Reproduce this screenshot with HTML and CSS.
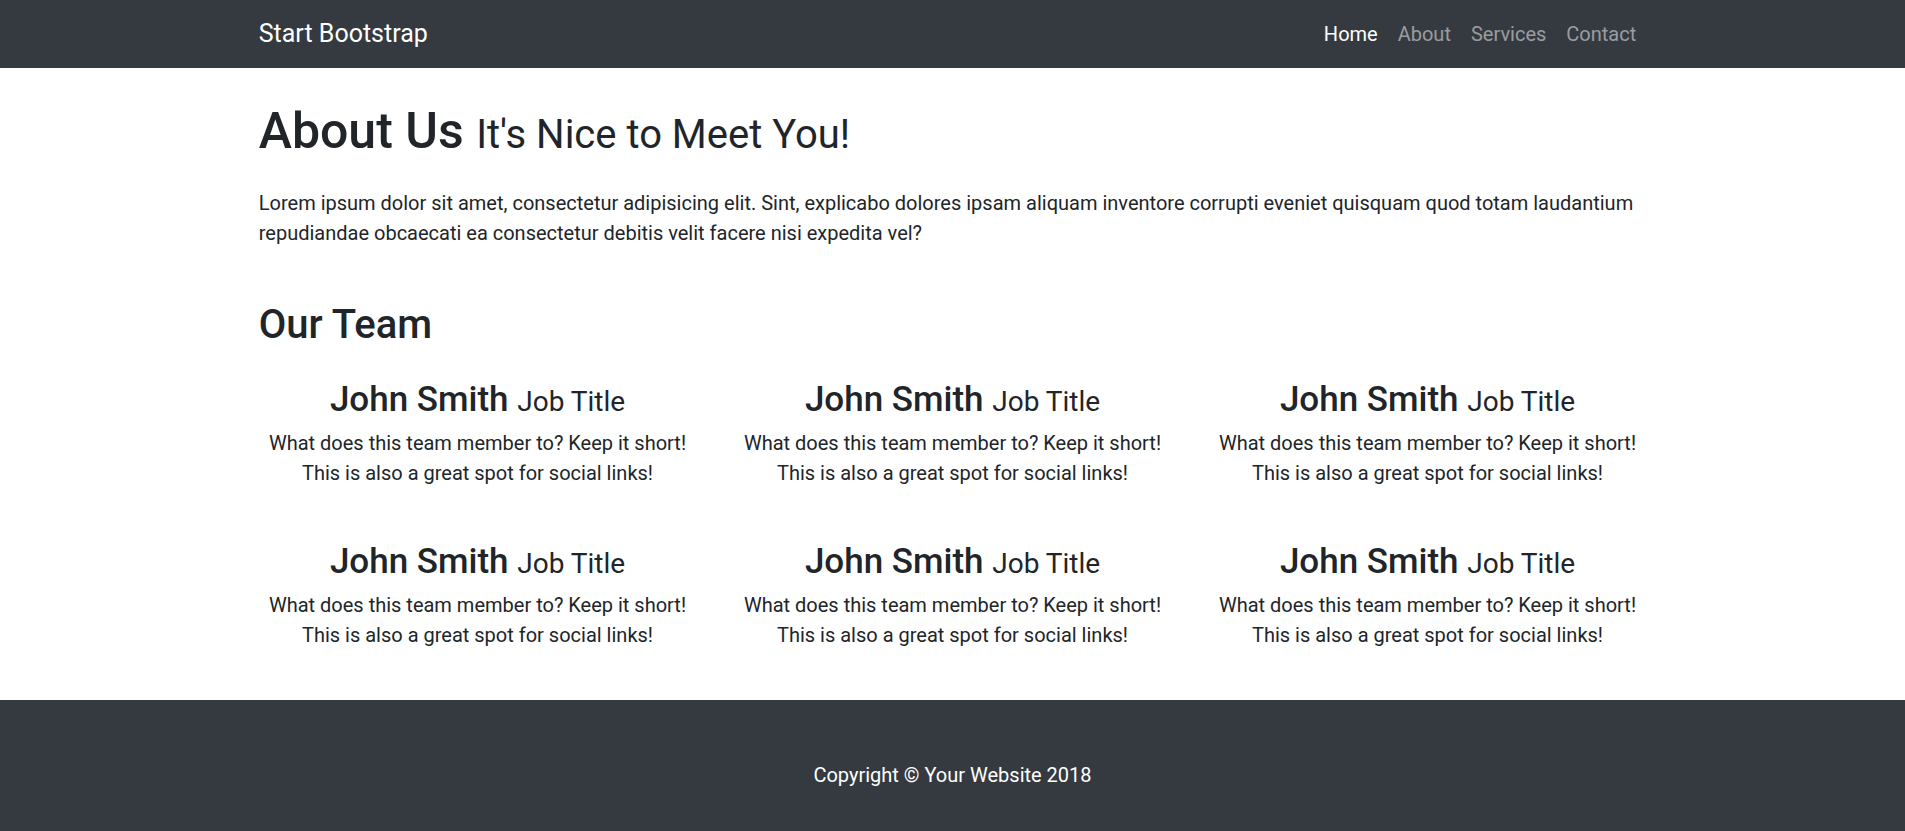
FILE: index.html
```html
<!DOCTYPE html>
<html lang="en">
<head>
<meta charset="utf-8">
<title>About Us</title>
<link rel="stylesheet" href="styles.css">
</head>
<body>
<nav class="navbar">
  <div class="container navbar-inner">
    <a class="brand" href="#">Start Bootstrap</a>
    <ul class="nav">
      <li><a class="nav-link active" href="#">Home</a></li>
      <li><a class="nav-link" href="#">About</a></li>
      <li><a class="nav-link" href="#">Services</a></li>
      <li><a class="nav-link" href="#">Contact</a></li>
    </ul>
  </div>
</nav>

<main class="container">
  <section class="intro">
    <h1 class="page-title">About Us <small>It's Nice to Meet You!</small></h1>
    <p>Lorem ipsum dolor sit amet, consectetur adipisicing elit. Sint, explicabo dolores ipsam aliquam inventore corrupti eveniet quisquam quod totam laudantium repudiandae obcaecati ea consectetur debitis velit facere nisi expedita vel?</p>
  </section>

  <section class="team-head">
    <h2 class="section-title">Our Team</h2>
  </section>

  <div class="team">
    <div class="member">
      <h3>John Smith <small>Job Title</small></h3>
      <p>What does this team member to? Keep it short! This is also a great spot for social links!</p>
    </div>
    <div class="member">
      <h3>John Smith <small>Job Title</small></h3>
      <p>What does this team member to? Keep it short! This is also a great spot for social links!</p>
    </div>
    <div class="member">
      <h3>John Smith <small>Job Title</small></h3>
      <p>What does this team member to? Keep it short! This is also a great spot for social links!</p>
    </div>
    <div class="member">
      <h3>John Smith <small>Job Title</small></h3>
      <p>What does this team member to? Keep it short! This is also a great spot for social links!</p>
    </div>
    <div class="member">
      <h3>John Smith <small>Job Title</small></h3>
      <p>What does this team member to? Keep it short! This is also a great spot for social links!</p>
    </div>
    <div class="member">
      <h3>John Smith <small>Job Title</small></h3>
      <p>What does this team member to? Keep it short! This is also a great spot for social links!</p>
    </div>
  </div>
</main>

<footer class="footer">
  <div class="container">
    <p class="copyright">Copyright &copy; Your Website 2018</p>
  </div>
</footer>
</body>
</html>
```
FILE: styles.css
```css
html {
  font-size: 20px;
}
* {
  box-sizing: border-box;
}
body {
  margin: 0;
  font-family: "Roboto", "Liberation Sans", sans-serif;
  font-size: 1rem;
  line-height: 1.5;
  color: #212529;
  background: #fff;
}
.container {
  width: 100%;
  max-width: 1425px;
  margin: 0 auto;
  padding: 0 18.75px;
}

/* navbar */
.navbar {
  background: #343a40;
  padding: 9px 0;
}
.navbar-inner {
  display: flex;
  align-items: center;
  justify-content: space-between;
}
.brand {
  font-size: 1.25rem;
  line-height: 1.5;
  padding: 6.25px 0;
  color: #fff;
  text-decoration: none;
}
.nav {
  display: flex;
  list-style: none;
  margin: 0;
  padding: 0;
}
.nav-link {
  display: block;
  padding: 10px;
  color: rgba(255, 255, 255, 0.5);
  text-decoration: none;
}
.nav-link.active {
  color: #fff;
}

/* headings */
h1, h2, h3 {
  font-weight: 500;
  line-height: 1.2;
  margin: 0 0 7px;
  padding-top: 3px;
}
h1 small, h3 small {
  font-size: 80%;
  font-weight: 400;
}
.intro,
.team-head {
  display: flow-root;
}
.page-title {
  font-size: 2.5rem;
  margin: 30px 0 27px;
}
.intro p {
  margin: 0 0 1rem;
}
.section-title {
  font-size: 2rem;
  margin: 30px 0 27px;
}

/* team */
.team {
  display: grid;
  grid-template-columns: repeat(3, 1fr);
  margin: 0 -18.75px;
}
.member {
  padding: 0 18.75px;
  margin-bottom: 1.5rem;
  text-align: center;
}
.member h3 {
  font-size: 1.75rem;
}
.member p {
  margin: 0 0 1rem;
}

/* footer */
.footer {
  background: #343a40;
  padding: 3rem 0;
}
.copyright {
  margin: 0;
  text-align: center;
  color: #fff;
}
```
